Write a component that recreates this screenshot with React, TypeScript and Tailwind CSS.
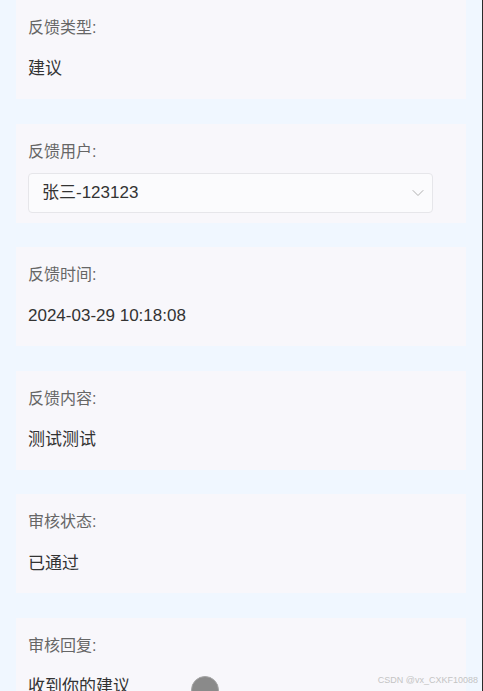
import { ChevronDown } from "lucide-react";

const items = [
  { label: "反馈类型:", value: "建议" },
  { label: "反馈用户:", value: "张三-123123", select: true },
  { label: "反馈时间:", value: "2024-03-29 10:18:08" },
  { label: "反馈内容:", value: "测试测试" },
  { label: "审核状态:", value: "已通过" },
  { label: "审核回复:", value: "收到你的建议", ball: true },
];

const App = () => {
  return (
    <div
      className="relative min-h-screen h-[691px] overflow-hidden bg-[#f0f7ff] border-r border-[#2a2a2a]"
      style={{ fontFamily: '"Liberation Sans", "Noto Sans CJK SC", sans-serif' }}
    >
      <div className="px-4">
        {items.map((item, index) => (
          <div
            key={index}
            className="h-[99px] mb-[24.6px] bg-[#f8f7fb] px-3 pt-[18px]"
          >
            <div className="h-5 leading-5 text-[16px] text-[#666]">{item.label}</div>

            {item.select ? (
              <div className="mt-[11px] h-10 w-[405px] flex items-center justify-between rounded border border-[#e6e6ea] bg-[#fbfbfd] pl-[13px] pr-1">
                <span className="text-[17px] text-[#333]">{item.value}</span>
                <ChevronDown className="w-5 h-5 text-[#b0b0b0]" strokeWidth={1.2} />
              </div>
            ) : (
              <div className="mt-[11px] h-10 flex items-center">
                <span className="text-[17px] text-[#333]">{item.value}</span>
                {item.ball && (
                  <span className="ml-[61px] mt-[6px] w-7 h-7 rounded-full bg-[#8a8a8a] border border-[#a5a5a5]" />
                )}
              </div>
            )}
          </div>
        ))}
      </div>

      {/* watermark */}
      <div className="absolute right-[4px] top-[674px] text-[9px] leading-3 text-[#c4c4c4]">
        CSDN @vx_CXKF10088
      </div>
    </div>
  );
};

export default App;
